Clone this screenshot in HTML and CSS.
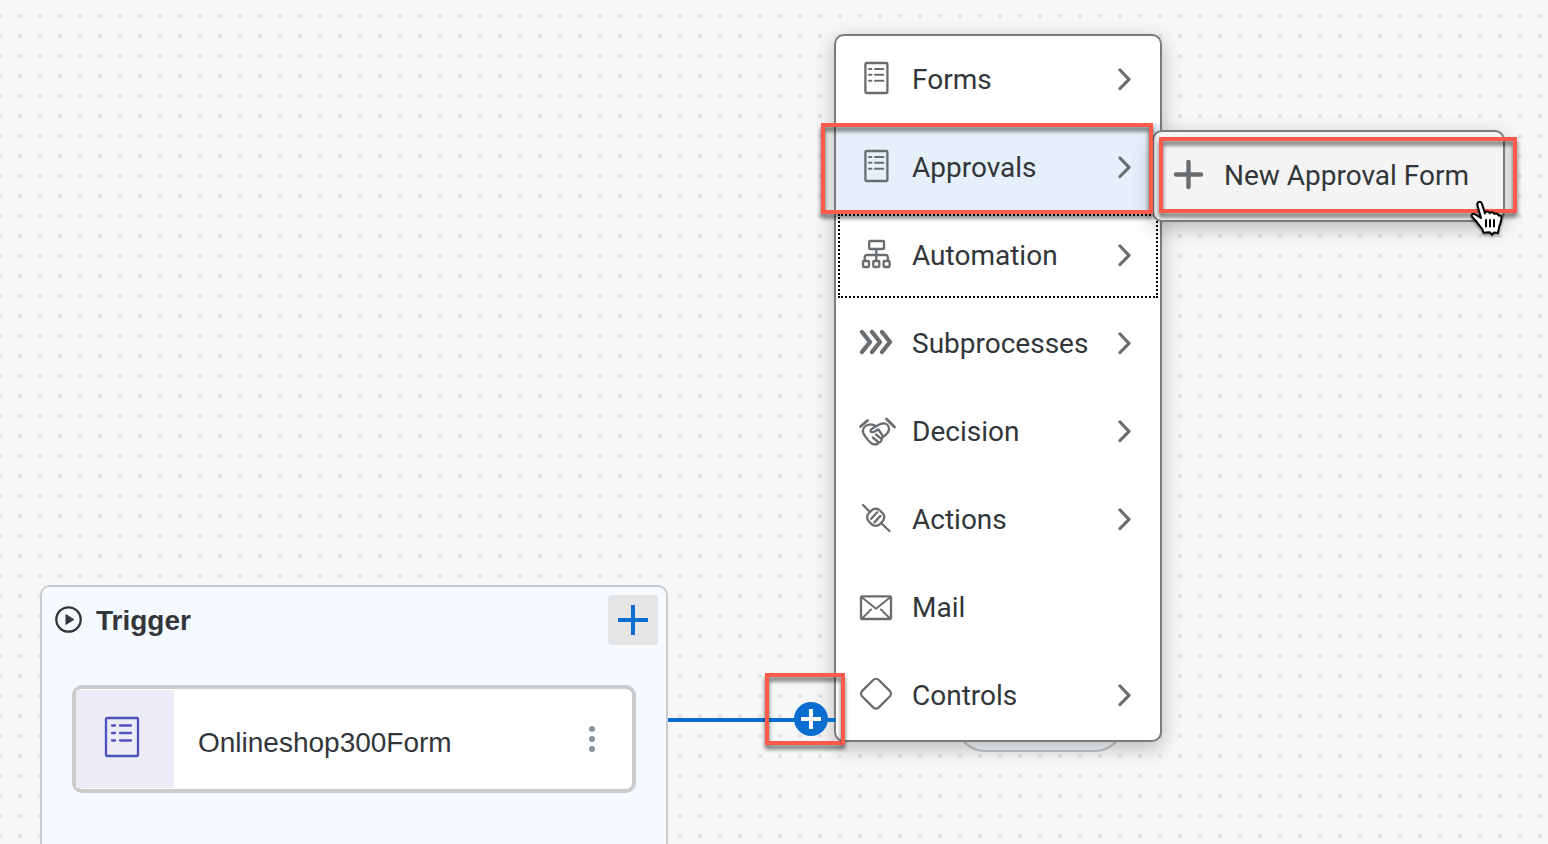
FILE: index.html
```html
<!DOCTYPE html>
<html lang="en">
<head>
<meta charset="utf-8">
<title>Process Builder</title>
<link rel="stylesheet" href="styles.css">
</head>
<body>
<svg class="defs" aria-hidden="true">
  <symbol id="form" viewBox="0 0 36 36">
    <rect x="7.4" y="2" width="22" height="30" rx="1"/>
    <path d="M11 8h2.4M17 8h8.4M11 13.8h2.4M17 13.8h8.4M11 19.8h2.4M17 19.8h8.4" stroke-width="2"/>
  </symbol>
  <symbol id="chevron" viewBox="0 0 14 24">
    <path d="M2 3l9 9.300L2 21.500" stroke-width="3.200"/>
  </symbol>
</svg>
<main class="canvas">
  <section class="trigger">
    <header class="trigger-head">
      <svg class="play" viewBox="0 0 28 28" aria-hidden="true"><circle cx="14.500" cy="13.500" r="12.200"/><path d="M12 9v9.400l7.500-4.700z"/></svg>
      <h2 class="trigger-title">Trigger</h2>
      <button class="add" type="button" aria-label="Add trigger"><svg viewBox="0 0 30 30"><path d="M15 0v30M0 15h30"/></svg></button>
    </header>
    <article class="card">
      <div class="card-icon"><svg viewBox="0 0 36 42" aria-hidden="true"><rect x="2" y="2" width="32" height="38" rx="1"/><path d="M8 9.500h3M16 9.500h11M8 17h3M16 17h11M8 24.500h3M16 24.500h11"/></svg></div>
      <span class="card-name">Onlineshop300Form</span>
      <button class="more" type="button" aria-label="More options"><svg viewBox="0 0 6 26"><circle cx="3" cy="3" r="3"/><circle cx="3" cy="13" r="3"/><circle cx="3" cy="23" r="3"/></svg></button>
    </article>
  </section>

  <div class="end-node"></div>

  <ul class="menu">
    <li><button class="item" type="button"><svg class="icon"><use href="#form"/></svg><span class="label">Forms</span><svg class="chevron"><use href="#chevron"/></svg></button></li>
    <li><button class="item selected" type="button"><svg class="icon"><use href="#form"/></svg><span class="label">Approvals</span><svg class="chevron"><use href="#chevron"/></svg></button></li>
    <li><button class="item focused" type="button"><svg class="icon" viewBox="0 0 36 36"><path d="M12.800 4h12.400q.8 0 .8.800v6.400q0 .8-.8.800H12q-.8 0-.8-.800V4.800q0-.8.800-.800zM18.300 12v11M6.700 23v-2.500q0-2.500 2.500-2.500h18.200q2.500 0 2.500 2.500V23"/><rect x="5" y="24" width="6" height="6" rx="1"/><rect x="15.300" y="24" width="6" height="6" rx="1"/><rect x="25.600" y="24" width="6" height="6" rx="1"/></svg><span class="label">Automation</span><svg class="chevron"><use href="#chevron"/></svg></button></li>
    <li><button class="item" type="button"><svg class="icon thick" viewBox="0 0 36 36"><path d="M4 7l8 10L4 27M14 7l8 10L14 27M24 7l8 10L24 27"/></svg><span class="label">Subprocesses</span><svg class="chevron"><use href="#chevron"/></svg></button></li>
    <li><button class="item" type="button"><svg class="icon" viewBox="0 0 36 36"><path d="M2.500 13.500L9.500 7.500M28.500 6l8 8" stroke-width="2.800"/><path d="M18 13.200C14.500 10.800 10 10.800 7 13.500c-3 2.800-2.300 6.500 0 9.500 2.300 3.200 5.500 8.500 10 8.500 2 0 3-.8 3.800-2 2.200-.3 3.200-2 2.900-3.800 1.300-1.200 1-2.700.2-4l-3.400-5.200c-2.500.5-3.700 2.700-6.200 2.700-2.200 0-2.300-2.700-.3-3.500l4-2.500c2.500-1.500 5-2.900 7.500-2.900 3.200 0 5.500 2.500 5.500 5.700 0 3.800-2.500 5-5 7.300M14.800 24.500l5.300 4.500M18 21.500l5 4.200"/></svg><span class="label">Decision</span><svg class="chevron"><use href="#chevron"/></svg></button></li>
    <li><button class="item" type="button"><svg class="icon" viewBox="0 0 36 36"><path d="M5 4l7 7M24 23l7.500 7M13.200 17.800l6-6.500M16.400 21.400l6-6.500"/><rect x="9.900" y="8.500" width="15.600" height="15.600" rx="6" transform="rotate(45 17.700 16.300)"/></svg><span class="label">Actions</span><svg class="chevron"><use href="#chevron"/></svg></button></li>
    <li><button class="item" type="button"><svg class="icon" viewBox="0 0 36 36"><rect x="3" y="7.300" width="30" height="22.700" rx="1"/><path d="M3.500 8L18 19.700 32.500 8M4 29.500l9-9M32 29.500l-9-9" stroke-width="2"/></svg><span class="label">Mail</span></button></li>
    <li><button class="item" type="button"><svg class="icon" viewBox="0 0 36 36"><rect x="6.300" y="5" width="23.400" height="23.400" rx="4" transform="rotate(45 18 16.700)"/></svg><span class="label">Controls</span><svg class="chevron"><use href="#chevron"/></svg></button></li>
  </ul>

  <div class="edge"><button class="node-add" type="button" aria-label="Add step"><svg viewBox="0 0 20 20"><path d="M10 0v20M0 10h20"/></svg></button></div>

  <ul class="submenu">
    <li><button class="item sub" type="button"><svg class="plus" viewBox="0 0 30 30"><path d="M14.500 2v25M2 14.500h25"/></svg><span class="label">New Approval Form</span></button></li>
  </ul>

  <div class="mark mark-approvals"></div>
  <div class="mark mark-new"></div>
  <div class="mark mark-node"></div>
  <svg class="pointer" viewBox="0 0 36 40" aria-hidden="true"><path d="M13 20L9.500 7.500C8.500 3.500 12.800 2.500 14 6l3 9.500c.2-2.500 4-2.500 4.800-.2.800-1.600 4-1.400 4.500.8 1.200-1.300 3.800-.6 4.200 1.500 2-.6 3 .2 3 2.500 0 4-1.800 6-2.500 9.500L30 35l-4-.500-1.800 2.200-2.500-2.400-6.200.4c-.7-5-4.200-6.500-6.200-10-1.500-2.700-4.300-4.200-5.300-6.200-1-2.200 1.200-3.600 3-2.200L13 20z"/><path d="M18 22v6.500M22 22v6.500M26 22v6.500"/></svg>
</main>
</body>
</html>
```

FILE: styles.css
```css
* {
  box-sizing: border-box;
}

body {
  margin: 0;
  color: #32363a;
  font-family: Roboto, "Liberation Sans", sans-serif;
  font-size: 28px;
  line-height: 36px;
}

button {
  border: 0;
  padding: 0;
  background: none;
  color: inherit;
  font: inherit;
  cursor: pointer;
}

ul {
  margin: 0;
  padding: 0;
  list-style: none;
}

svg {
  display: block;
  flex: none;
  fill: none;
  stroke: currentColor;
  stroke-width: 2.3;
  stroke-linecap: round;
  stroke-linejoin: round;
  overflow: visible;
}

.defs {
  position: absolute;
  width: 0;
  height: 0;
}

/* Free canvas with a 20px dot grid */
.canvas {
  position: relative;
  min-height: 100vh;
  overflow: hidden;
  background: #f7f7f7 conic-gradient(from 90deg at 16px 16px, #e5e5e5 90deg, transparent 0) -18px -2px / 20px 20px;
}

/* Trigger group */
.trigger {
  position: absolute;
  top: 585px;
  left: 40px;
  bottom: -12px;
  width: 628px;
  border: 2px solid #cbcbcb;
  border-radius: 10px;
  background: #f5faff;
  font-family: "Liberation Sans", Arial, sans-serif;
}

.trigger-head {
  display: flex;
  align-items: center;
  gap: 14px;
  padding: 8px 8px 0 12px;
}

.play {
  width: 28px;
  height: 28px;
}

.play path {
  fill: currentColor;
  stroke-width: 1;
}

.trigger-title {
  flex: 1;
  margin: 0;
  padding-top: 2px;
  font-size: 28px;
}

.add {
  display: grid;
  place-items: center;
  width: 50px;
  height: 50px;
  border-radius: 4px;
  background: #e5e5e5;
  color: #0a6ed1;
}

.add svg {
  width: 30px;
  height: 30px;
  stroke-width: 4;
  stroke-linecap: butt;
}

.card {
  display: flex;
  align-items: center;
  height: 108px;
  margin: 40px 30px 0;
  border: 4px solid #cbcbcb;
  border-radius: 10px;
  background: #fff;
}

.card-icon {
  display: grid;
  place-items: center;
  width: 98px;
  height: 98px;
  padding: 0 6px 4px 0;
  background: #ecebf8;
  color: #4f51bd;
}

.card-icon svg {
  width: 36px;
  height: 42px;
}

.card-name {
  flex: 1;
  padding: 8px 24px 0;
}

.more {
  padding: 0 37px 0 0;
  color: #8795a1;
}

.more svg {
  width: 6px;
  height: 26px;
  fill: currentColor;
  stroke: none;
}

/* Node behind the menu */
.end-node {
  position: absolute;
  top: 688px;
  left: 954px;
  width: 172px;
  height: 64px;
  border: 2px solid #c4c4c4;
  border-radius: 32px;
  background: #f2f8fd;
}

/* Menus */
.menu,
.submenu {
  position: absolute;
  border: 2px solid #7a7b7d;
  border-radius: 10px;
  background: #fff;
  box-shadow: 0 6px 20px rgba(0, 0, 0, 0.25);
  overflow: hidden;
}

.menu {
  top: 34px;
  left: 834px;
  width: 328px;
}

.submenu {
  top: 130px;
  left: 1152px;
  width: 353px;
  background: #f4f4f4;
}

.item {
  display: flex;
  align-items: center;
  gap: 18px;
  width: 100%;
  height: 88px;
  padding: 0 28px 2px 22px;
  text-align: left;
}

.selected {
  background: #e5f0fa;
}

.focused {
  outline: 2px dotted #000;
  outline-offset: -4px;
}

.label {
  flex: 1;
  padding-top: 2px;
  white-space: nowrap;
}

.icon {
  width: 36px;
  height: 36px;
  color: #6a6d70;
}

.thick {
  stroke-width: 4.4;
}

.chevron {
  width: 14px;
  height: 24px;
  color: #6a6d70;
}

.sub {
  gap: 20px;
  padding: 0 20px 2px;
}

.plus {
  width: 30px;
  height: 30px;
  color: #6a6d70;
  stroke-width: 4.4;
}

/* Connector and its add handle */
.edge {
  position: absolute;
  top: 702px;
  left: 668px;
  display: flex;
  justify-content: flex-end;
  width: 168px;
  padding-right: 8px;
  background: linear-gradient(#0a6ed1, #0a6ed1) 0 16px / 100% 4px no-repeat;
}

.node-add {
  display: grid;
  place-items: center;
  width: 34px;
  height: 34px;
  border-radius: 50%;
  background: #0a6ed1;
  color: #fff;
}

.node-add svg {
  width: 20px;
  height: 20px;
  stroke-width: 4;
  stroke-linecap: butt;
}

/* Highlight frames */
.mark {
  position: absolute;
  border: 4px solid #ff5a4c;
  filter: drop-shadow(0 4px 2px rgba(0, 0, 0, 0.6));
  pointer-events: none;
}

.mark-approvals {
  top: 123px;
  left: 821px;
  width: 332px;
  height: 91px;
}

.mark-new {
  top: 137px;
  left: 1159px;
  width: 358px;
  height: 76px;
}

.mark-node {
  top: 673px;
  left: 765px;
  width: 80px;
  height: 72px;
}

.pointer {
  position: absolute;
  top: 198px;
  left: 1468px;
  width: 36px;
  height: 40px;
  fill: #fff;
  stroke: #000;
  stroke-width: 2;
  filter: drop-shadow(0 2px 1px rgba(0, 0, 0, 0.4));
}
```
